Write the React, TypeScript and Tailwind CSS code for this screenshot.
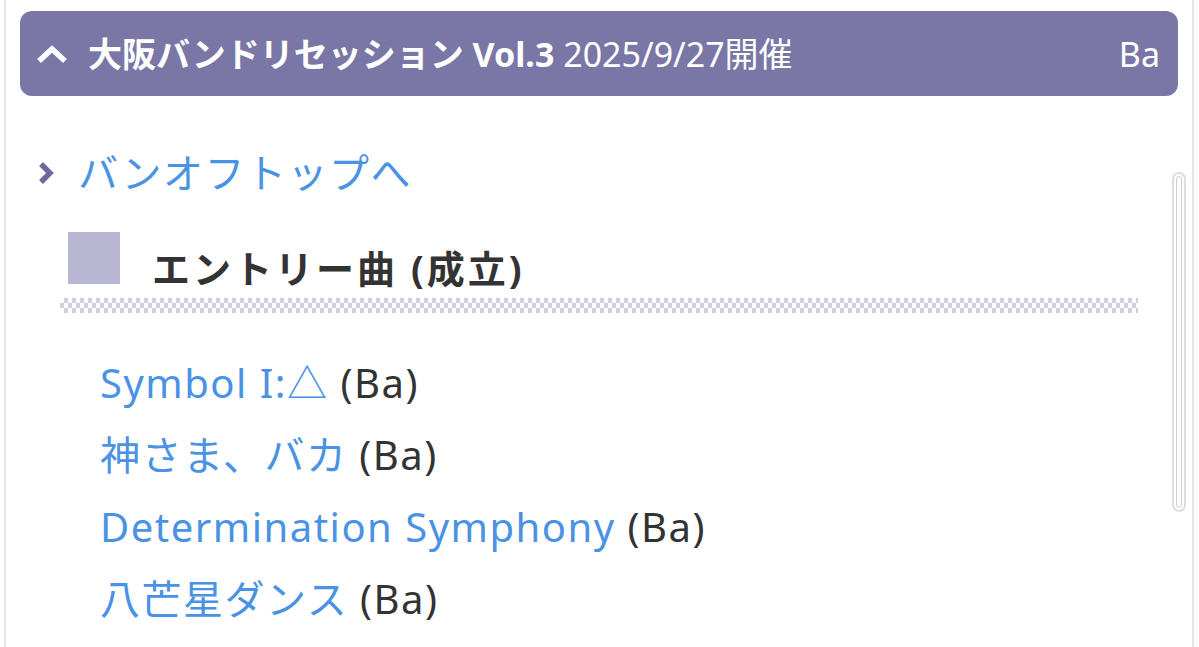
import React from 'react';

const songs = [
  { title: 'Symbol I:△', part: 'Ba' },
  { title: '神さま、バカ', part: 'Ba' },
  { title: 'Determination Symphony', part: 'Ba' },
  { title: '八芒星ダンス', part: 'Ba' },
];

const App: React.FC = () => {
  return (
    <div className="relative min-h-screen overflow-hidden bg-white font-['Noto_Sans','Noto_Sans_CJK_JP',sans-serif]">
      <div className="ml-[4px] mr-[5px] min-h-screen border-x-2 border-[#e4e4e4] px-[14px] pt-[11px]">
        {/* event header */}
        <div className="flex h-[85px] items-center rounded-[12px] bg-[#7a76a6] pl-[15px] pr-[18px] text-white">
          <svg width="34" height="20" viewBox="0 0 34 20" className="shrink-0">
            <path d="M4 17 L17 5 L30 17" fill="none" stroke="#ffffff" strokeWidth="5.5" strokeLinejoin="miter" />
          </svg>
          <div className="ml-[19px] flex-1 text-[34px] leading-none whitespace-nowrap">
            <span className="font-bold">大阪バンドリセッション Vol.3</span>{' '}
            <span>2025/9/27開催</span>
          </div>
          <span className="text-[34px] leading-none">Ba</span>
        </div>

        {/* back link */}
        <div className="mt-[47px] flex items-center pl-[17px]">
          <svg width="18" height="26" viewBox="0 0 18 26" className="shrink-0">
            <path d="M4 4 L13 13 L4 22" fill="none" stroke="#6e699d" strokeWidth="5.5" />
          </svg>
          <a href="#" className="ml-[23px] text-[40px] leading-[60px] tracking-[1.5px] text-[#4a92e4]">
            バンオフトップへ
          </a>
        </div>

        {/* section heading */}
        <div className="mx-[40px] mt-[29px]">
          <div className="flex items-start">
            <div className="ml-[8px] h-[52px] w-[52px] shrink-0 bg-[#b9b6d4]" />
            <h2 className="ml-[32px] mt-[10px] text-[38px] leading-[52px] tracking-[3px] font-bold text-[#333333]">
              エントリー曲 (成立)
            </h2>
          </div>
          <div className="mt-[4px] h-[15px] bg-[image:repeating-conic-gradient(#d0cee5_0%_25%,#ffffff_0%_50%)] bg-size-[8px_10px]" />
        </div>

        {/* song list */}
        <ul className="mt-[34px] pl-[80px]">
          {songs.map((s) => (
            <li key={s.title} className="text-[40px] leading-[72px] tracking-[1.5px] text-[#333333]">
              <a href="#" className="text-[#4a92e4]">
                {s.title}
              </a>{' '}
              ({s.part})
            </li>
          ))}
        </ul>
      </div>

      {/* overlay scrollbar thumb */}
      <div className="absolute right-[13px] top-[172px] flex h-[340px] w-[14px] justify-center rounded-full border-2 border-[#dddddd] bg-white p-[2px]">
        <div className="h-full w-[6px] rounded-full border border-[#d0d0d0]" />
      </div>
    </div>
  );
};

export default App;
